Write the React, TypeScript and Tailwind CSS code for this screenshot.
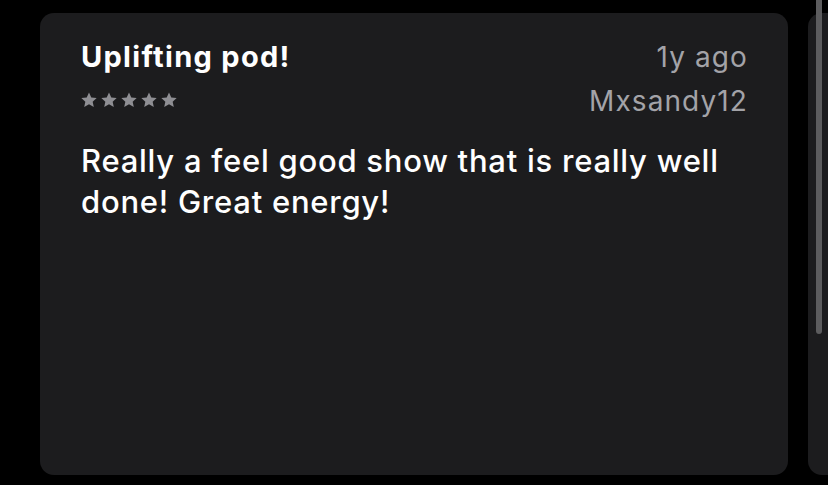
import React from 'react'

const Star = () => (
  <svg width="16" height="16" viewBox="0 0 24 24" fill="#8e8e93">
    <path d="M12 0.8l3.4 7.4 8.1.9-6 5.5 1.7 8-7.2-4.1-7.2 4.1 1.7-8-6-5.5 8.1-.9z" />
  </svg>
)

const App = () => {
  return (
    <div
      className="w-[828px] h-[485px] bg-black overflow-hidden relative"
      style={{ fontFamily: 'Inter, "Noto Sans", sans-serif' }}
    >
      <div className="flex gap-5 pl-10 pt-[13px]">
        <div className="w-[748px] h-[462px] shrink-0 rounded-[14px] bg-[#1c1c1e] px-[41px] pt-[26px]">
          <div className="flex justify-between items-start">
            <div>
              <div className="text-[29px] font-bold text-white leading-[36px] tracking-[1.3px]">Uplifting pod!</div>
              <div className="flex gap-[4px] mt-[17px]">
                <Star />
                <Star />
                <Star />
                <Star />
                <Star />
              </div>
            </div>
            <div className="text-right text-[#a3a3a8] text-[28px] leading-[44px] mt-[-4px] tracking-[1.1px] mr-[-1px]">
              <div>1y ago</div>
              <div>Mxsandy12</div>
            </div>
          </div>
          <p className="text-white text-[31px] leading-[41px] mt-[17px] font-medium tracking-[0.75px]">
            Really a feel good show that is really well done! Great energy!
          </p>
        </div>
        <div className="w-[748px] h-[462px] shrink-0 rounded-[14px] bg-[#1c1c1e]"></div>
      </div>
      <div className="absolute left-[816px] top-0 w-[6px] h-[334px] rounded-b-full bg-[#5c5c5e]"></div>
    </div>
  )
}

export default App
